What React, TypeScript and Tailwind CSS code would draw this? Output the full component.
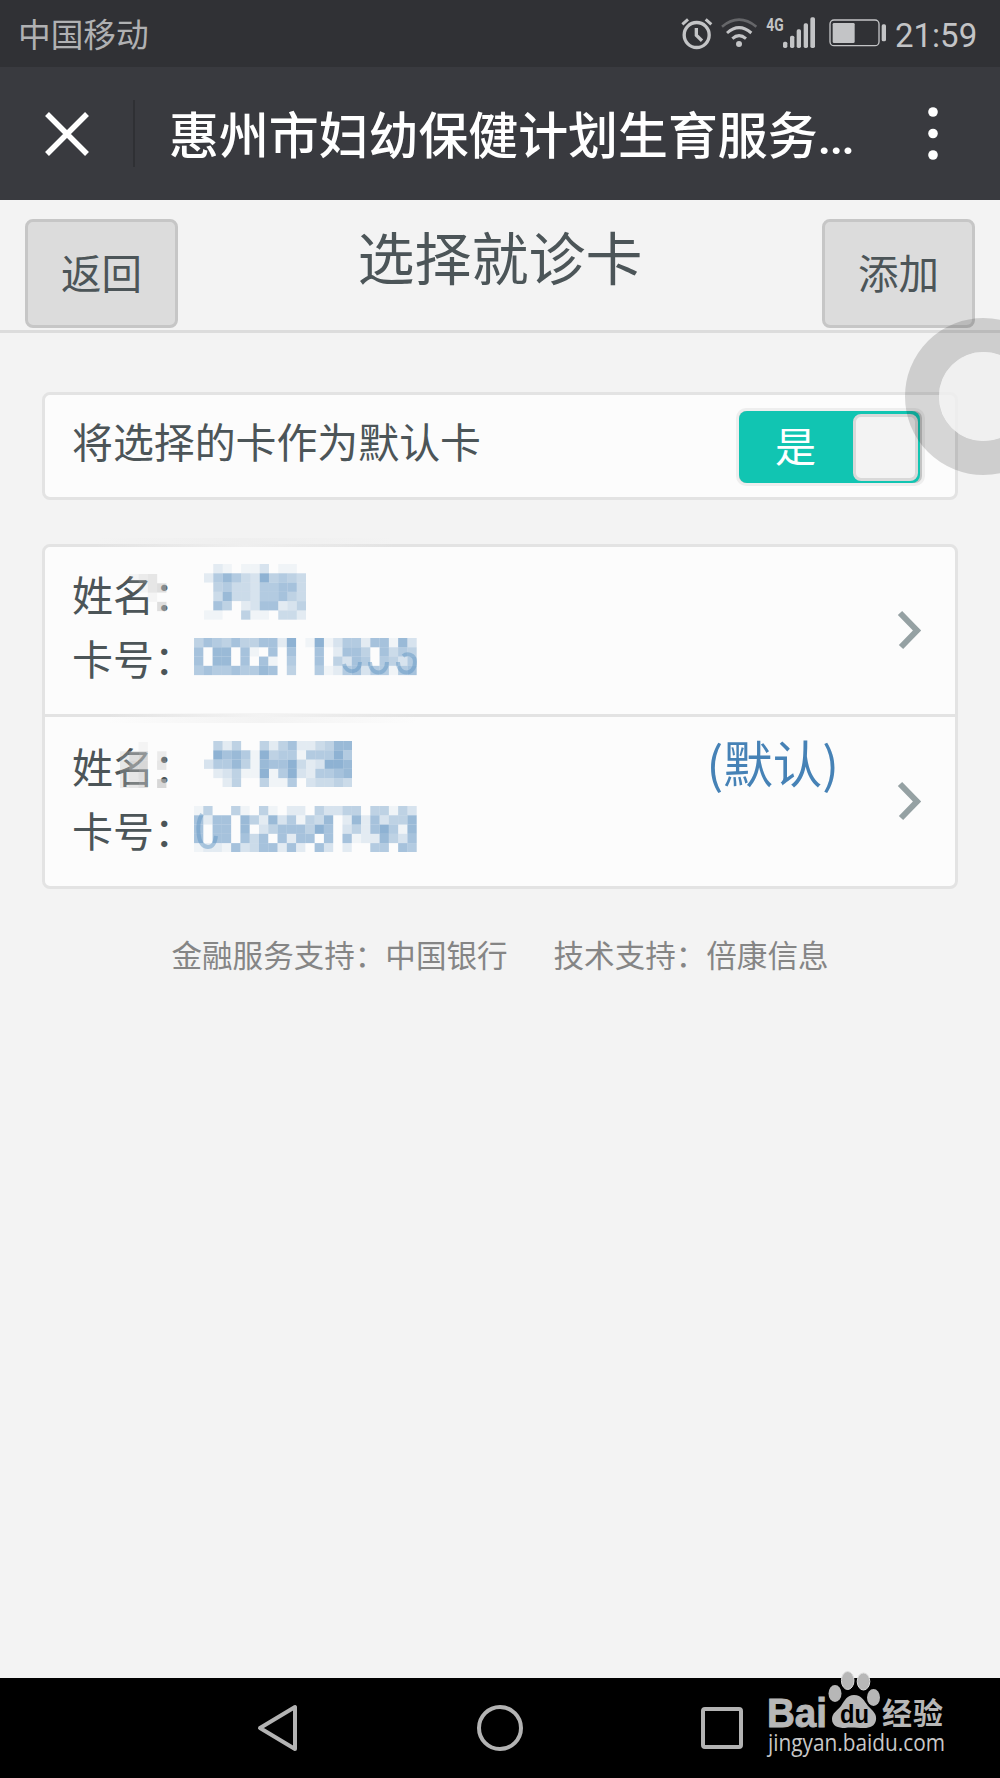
import React from 'react';

const CELL = 9.28;

// each digit is the tint strength of one mosaic cell, 0 is empty
const NAME_1 = ['02101130110', '26864395654', '05644366774', '04844366754', '07502377235', '11005110442'];
const CARD_1 = [
  '576575577290191366277183',
  '708807107070070277507465',
  '708807071060070537606536',
  '676676687050061267366167',
];
const NAME_2 = ['0525005257224588', '0978619566166696', '3668518779423998', '0235119169326678', '0025005116034454'];
const CARD_2 = [
  '150051051022053355055153',
  '727708528361548028273558',
  '707708035777597035279618',
  '707707470727707071228537',
  '122173477272073020066076',
];

interface MosaicProps {
  rows: string[];
  color?: string;
  className?: string;
  children?: React.ReactNode;
}

function Mosaic({ rows, color = '#75a1c9', className = '', children }: MosaicProps) {
  const w = rows[0].length * CELL;
  const h = rows.length * CELL;

  return (
    <svg width={w} height={h} viewBox={`0 0 ${w} ${h}`} className={`shrink-0 ${className}`}>
      {rows.map((row, y) =>
        row.split('').map((level, x) => (
          <rect
            key={`${x}-${y}`}
            x={x * CELL}
            y={y * CELL}
            width={CELL}
            height={CELL}
            fill={color}
            opacity={Number(level) / 11}
          />
        ))
      )}
      {children}
    </svg>
  );
}

function StatusIcons() {
  return (
    <svg width="206.7" height="36" viewBox="60 48 620 108" fill="none" stroke="#c3c4c6" className="overflow-visible">
      <circle cx="110" cy="105" r="37.500" strokeWidth="10" />
      <path d="M109 84v22l17 16" strokeWidth="10" />
      <path d="M67 73l17-15M154 73l-17-15" strokeWidth="9" />
      <path d="M186 80q51-42 103 0" strokeWidth="8" stroke="#66676a" />
      <path d="M201 99q36-32 73 0M217 116q20-18 41 0" strokeWidth="9" />
      <circle cx="237" cy="132" r="9" fill="#c3c4c6" stroke="none" />
      <text
        x="319"
        y="94"
        fontSize="57"
        fontWeight="700"
        textLength="52"
        lengthAdjust="spacingAndGlyphs"
        fill="#c3c4c6"
        stroke="none"
        className="font-['Roboto',sans-serif]"
      >
        4G
      </text>
      <g fill="#c3c4c6" stroke="none">
        <rect x="369" y="125" width="13" height="19" rx="5" />
        <rect x="390" y="107" width="13" height="37" rx="5" />
        <rect x="410" y="88" width="13" height="56" rx="5" />
        <rect x="431" y="70" width="13" height="74" rx="5" />
        <rect x="451" y="52" width="14" height="92" rx="5" />
        <rect x="518" y="69" width="66" height="60" rx="4" />
        <rect x="665" y="73" width="13" height="51" rx="5" />
      </g>
      <rect x="510" y="60" width="147" height="77" rx="12" strokeWidth="4" />
    </svg>
  );
}

function Chevron() {
  return (
    <svg width="28" height="42" viewBox="0 0 28 42" fill="none" className="shrink-0">
      <path d="M4 4L21 21.500L5 38" stroke="#95a1a3" strokeWidth="6" />
    </svg>
  );
}

function HeaderButton({ children }: { children: React.ReactNode }) {
  return (
    <button className="flex h-[109px] w-[153px] items-center justify-center rounded-lg border-[3px] border-[#c6c6c6] bg-[#dcdcdc] pb-[2px] text-[40.500px] leading-none">
      {children}
    </button>
  );
}

interface CardRowProps {
  name: string[];
  card: string[];
  smear: string[];
  nameClass: string;
  cardClass: string;
  smearClass: string;
  digits: string;
  children?: React.ReactNode;
  last?: boolean;
}

function CardRow({ name, card, smear, nameClass, cardClass, smearClass, digits, children, last }: CardRowProps) {
  return (
    <div
      className={`relative flex justify-between pl-[27px] pr-[31px] ${last ? 'h-[169px]' : 'h-[170px] border-b-[3px] border-[#e3e3e3]'}`}
    >
      <div className={last ? 'pt-[16px]' : 'pt-[14px]'}>
        <div className="relative flex h-16 items-center">
          <span className="w-[132px] shrink-0 whitespace-nowrap text-[41px] leading-none">姓名：</span>
          <Mosaic rows={name} className={nameClass} />
          <Mosaic rows={smear} color="#fcfcfc" className={`absolute left-12 ${smearClass}`} />
          <Mosaic rows={smear} color="#777777" className={`absolute left-12 opacity-60 ${smearClass}`} />
        </div>
        <div className="flex h-16 items-center">
          <span className="w-[122px] shrink-0 whitespace-nowrap text-[41px] leading-none">卡号：</span>
          <Mosaic rows={card} className={cardClass}>
            <path d={digits} fill="none" stroke="#5b92c2" strokeWidth="4" opacity="0.45" />
          </Mosaic>
        </div>
      </div>
      <div className="flex">
        {children}
        <div className={`flex items-center ${last ? 'h-[168px]' : 'h-[165px]'}`}>
          <Chevron />
        </div>
      </div>
      {!last && (
        <div className="absolute -bottom-[9px] left-[62px] h-[10px] w-[310px] bg-linear-to-r from-transparent via-[#f3f3f3] to-transparent" />
      )}
    </div>
  );
}

function Watermark() {
  return (
    <svg
      width="186"
      height="96"
      viewBox="0 0 186 96"
      fill="#b7b7b7"
      className="absolute left-[764px] top-[-10px] overflow-visible"
    >
      <g stroke="#dddddd" strokeWidth="1">
        <ellipse cx="71" cy="25.500" rx="6.500" ry="8.500" stroke="none" />
        <ellipse cx="83.700" cy="12.500" rx="6.300" ry="9" />
        <ellipse cx="99.500" cy="13.500" rx="6.300" ry="8.500" />
        <ellipse cx="109.500" cy="29.500" rx="6.500" ry="8.500" stroke="none" />
      </g>
      <path d="M90 27c8 0 10 6 14 11 5 5 9 8 8 14-1 6-6 8-12 8-7 0-13-1-19 0-7 0-13-2-13-9 0-6 5-8 9-13 4-6 6-11 13-11z" />
      <text
        x="3"
        y="59"
        fontSize="41"
        fontWeight="700"
        textLength="60"
        lengthAdjust="spacingAndGlyphs"
        stroke="#b7b7b7"
        className="font-['Liberation_Sans',sans-serif]"
      >
        Bai
      </text>
      <text
        x="76"
        y="55"
        fontSize="25"
        fontWeight="700"
        fill="#000"
        textLength="29"
        lengthAdjust="spacingAndGlyphs"
        className="font-['Liberation_Sans',sans-serif]"
      >
        du
      </text>
      <text x="118" y="56" fontSize="30" fontWeight="700" textLength="61" className="font-['Noto_Sans_CJK_SC',sans-serif]">
        经验
      </text>
      <text
        x="4"
        y="83"
        fontSize="23"
        fill="#c8c8c8"
        textLength="177"
        lengthAdjust="spacingAndGlyphs"
        className="font-['Open_Sans',sans-serif]"
      >
        jingyan.baidu.com
      </text>
    </svg>
  );
}

export default function App() {
  return (
    <div className="relative flex h-[1778px] w-[1000px] flex-col overflow-hidden bg-[#f3f3f3] font-['Noto_Sans_CJK_SC',sans-serif] text-[#4c5558]">
      <div className="flex h-[67px] items-center bg-[#303135] pl-[18px] text-[#b0b1b3]">
        <span className="mr-auto text-[32.700px] leading-none">中国移动</span>
        <StatusIcons />
        <span className="ml-2 w-[105px] pt-[3px] font-['Roboto',sans-serif] text-[33px] leading-none text-[#c3c4c6]">21:59</span>
      </div>

      <div className="flex h-[133px] items-center bg-[#393a3f] text-white">
        <svg width="44" height="44" viewBox="0 0 44 44" className="ml-[45px]">
          <path d="M2 2l40 40M42 2L2 42" stroke="#fff" strokeWidth="5.500" />
        </svg>
        <div className="ml-11 h-[67px] w-[2px] bg-[#2f3034]" />
        <h1 className="ml-[34px] w-[730px] whitespace-nowrap pt-1 text-[49.900px] font-medium leading-none">
          惠州市妇幼保健计划生育服务<span className="font-['Roboto',sans-serif] tracking-[-2px]">...</span>
        </h1>
        <svg width="10" height="54" viewBox="0 0 10 54" fill="#fff" className="ml-[29px]">
          <circle cx="5" cy="5" r="4.800" />
          <circle cx="5" cy="26.500" r="4.800" />
          <circle cx="5" cy="48" r="4.800" />
        </svg>
      </div>

      <header className="flex h-[133px] items-start justify-between border-b-[3px] border-[#dcdcdc] px-[25px] pt-[19px]">
        <HeaderButton>返回</HeaderButton>
        <h2 className="pt-[8px] text-[57px] leading-none">选择就诊卡</h2>
        <HeaderButton>添加</HeaderButton>
      </header>

      <main className="px-[42px] pt-[59px]">
        <section className="flex h-[108px] items-center justify-between rounded-lg border-[3px] border-[#e3e3e3] bg-[#fcfcfc] pl-[27px] pr-[30px]">
          <span className="pb-[9px] text-[40.900px] leading-none">将选择的卡作为默认卡</span>
          <div className="mt-[2px] flex h-[78px] w-[189px] rounded-[10px] border-[3px] border-[#eeeeee] bg-[#c4c4c4] pr-[2px]">
            <div className="flex w-full items-center justify-between rounded-lg bg-[#11c5b2] pl-[36px] pr-[2px] text-white">
              <span className="pb-[6px] text-[41px] leading-none">是</span>
              <span className="h-[67px] w-[65px] rounded-lg border-[3px] border-[#d9d9d9] bg-[#f3f3f3]" />
            </div>
          </div>
        </section>

        <section className="relative mt-[44px] rounded-lg border-[3px] border-[#e3e3e3] bg-[#fcfcfc]">
          <div className="absolute -top-[9px] left-[50px] h-[9px] w-[300px] bg-linear-to-r from-transparent via-[#efefef] to-transparent" />
          <CardRow
            name={NAME_1}
            card={CARD_1}
            nameClass="-mt-[2px]"
            cardClass="mt-0"
            smearClass="top-[13px]"
            smear={['012300', '001340', '000100', '000040', '000000']}
            digits="M150 26c2 10 16 10 16-2M176 24c0 14 17 14 17 0M204 24c0 14 17 14 17 0c0-8-8-9-12-6"
          />
          <CardRow
            name={NAME_2}
            card={CARD_2}
            nameClass="-mt-[2px]"
            cardClass="mt-0"
            smearClass="top-[9px]"
            smear={['001000', '245020', '355030', '234000', '234050']}
            digits="M8 8c-6 10-5 33 6 33c5 0 7-4 8-11"
            last
          >
            <span className="mr-[57px] mt-[20px] whitespace-nowrap text-[49.500px] leading-none text-[#4682b6]">(默认)</span>
          </CardRow>
        </section>

        <footer className="mt-[50px] flex justify-center gap-[46px] text-[30.550px] leading-none text-[#858585]">
          <span>金融服务支持：中国银行</span>
          <span>技术支持：倍康信息</span>
        </footer>
      </main>

      <nav className="relative mt-auto flex h-[100px] items-center bg-black">
        <svg
          width="42"
          height="50"
          viewBox="0 0 42 50"
          fill="none"
          stroke="#b3b3b3"
          strokeWidth="4"
          strokeLinejoin="round"
          className="ml-[257px]"
        >
          <path d="M38 4v42L3 25z" />
        </svg>
        <span className="ml-[178px] h-[46px] w-[46px] rounded-full border-4 border-[#b3b3b3]" />
        <span className="ml-[178px] h-[42px] w-[42px] rounded border-4 border-[#b3b3b3]" />
        <Watermark />
      </nav>

      {/* floating assistive dot */}
      <div className="absolute left-[905px] top-[318px] h-[157px] w-[157px] rounded-full border-[34px] border-black/15">
        <div className="h-full w-full rounded-full bg-[#efefef]/85" />
      </div>
    </div>
  );
}
